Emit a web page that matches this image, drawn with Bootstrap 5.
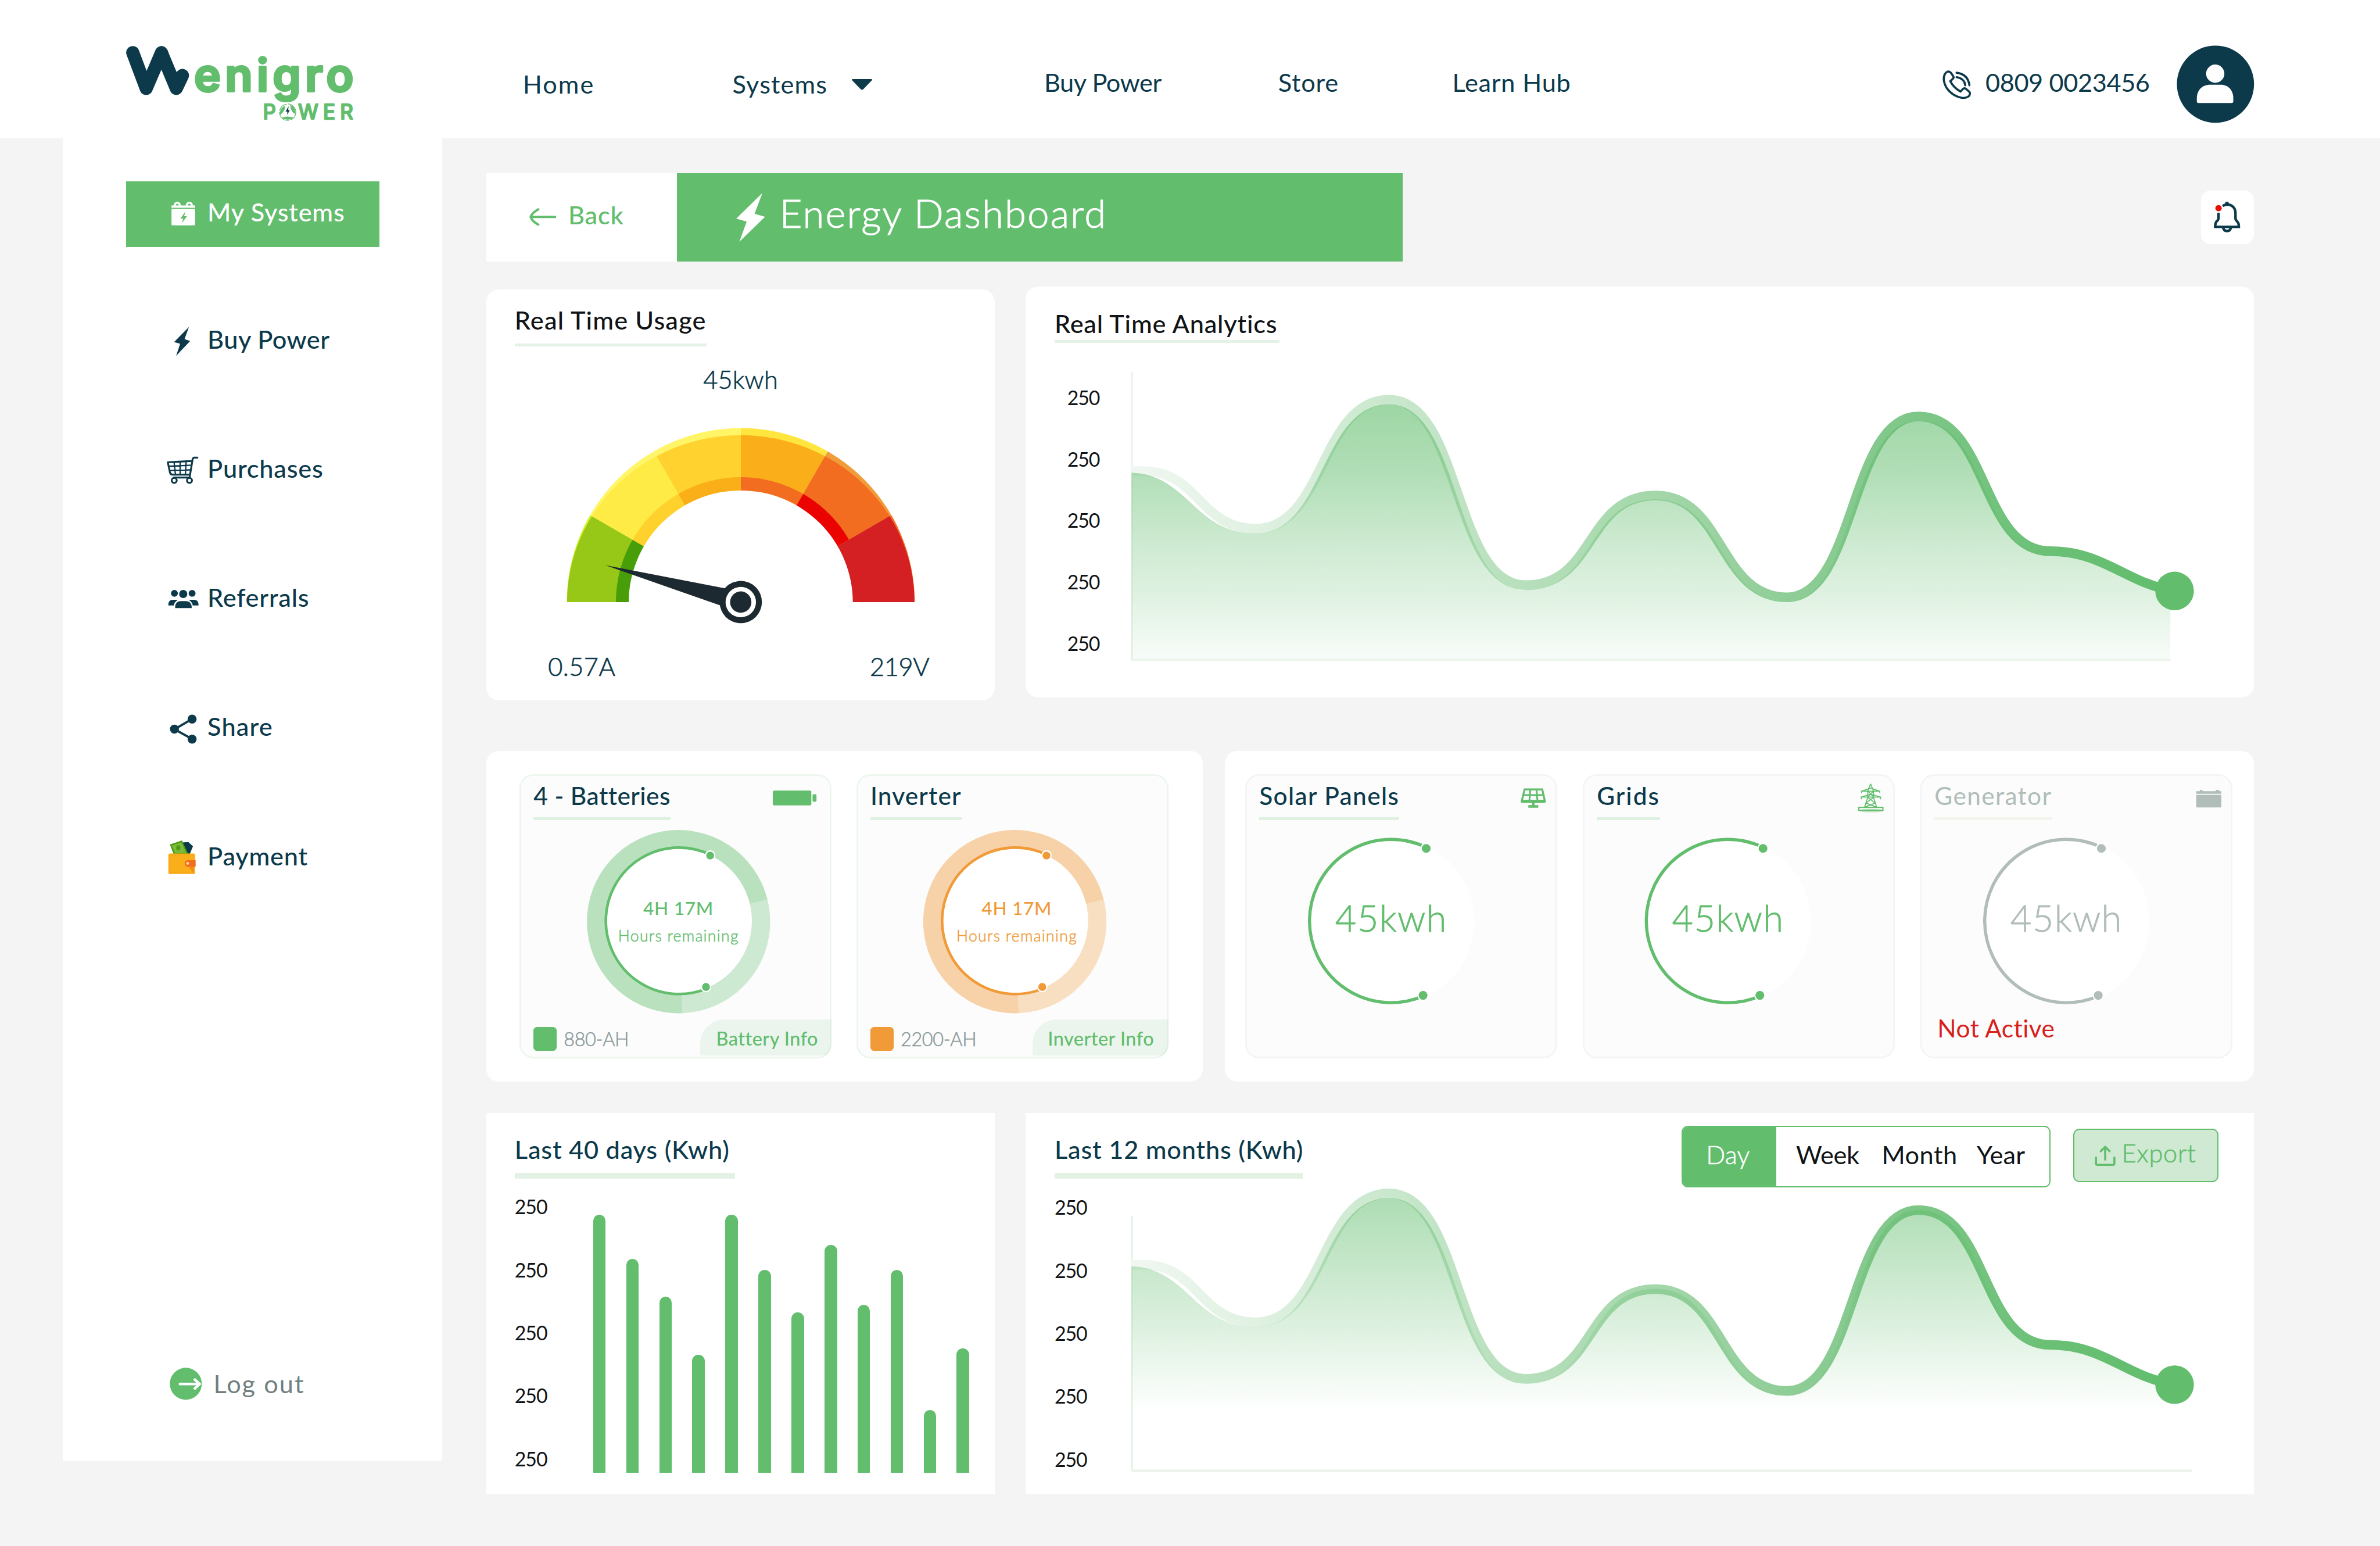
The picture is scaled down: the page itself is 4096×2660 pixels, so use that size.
<!DOCTYPE html>
<html lang="en">
<head>
<meta charset="utf-8">
<meta name="viewport" content="width=device-width, initial-scale=1">
<title>Wenigro Power - Energy Dashboard</title>
<link href="https://cdn.jsdelivr.net/npm/bootstrap@5.3.0/dist/css/bootstrap.min.css" rel="stylesheet">
<style>
  /* 1rem is a fixed share of the window, so the dashboard scales as one piece */
  html{font-size:calc(100vw / 453.6)}
  :root{--green:#62bd6d;--navy:#0c3a4b;--orange:#f09a38;--ink:#111416;--grey:#b0bdb8}
  body{font-family:Lato,"Open Sans",sans-serif;font-size:4.8rem;line-height:4.8rem;color:var(--navy);background:#f4f4f4;height:294.6rem;overflow:hidden}
  svg{display:block;flex:none;overflow:visible}
  .c-green{color:var(--green)}.c-orange{color:var(--orange)}.c-ink{color:var(--ink)}.c-grey{color:var(--grey)}
  .thin{font-weight:300;-webkit-text-stroke:.07rem currentColor}.book{font-weight:300;-webkit-text-stroke:.08rem currentColor}.med{font-weight:500}
  .lsm{letter-spacing:-.045rem}.ls0{letter-spacing:.02rem}.ls5{letter-spacing:.05rem}.ls8{letter-spacing:.085rem}
  .ls12{letter-spacing:.125rem}.ls15{letter-spacing:.15rem}.ls25{letter-spacing:.22rem}

  .topbar{height:26.4rem;padding:0 24rem 0 23rem}
  .logo{width:45rem;height:16rem;margin-top:7.7rem}
  .mainnav{margin:13.3rem 0 0 31.65rem}
  .mainnav .nav-link{padding:0;color:inherit;white-space:nowrap}
  .n-home{width:39.95rem;margin-top:.3rem}.n-sys{width:59.4rem;margin-top:.3rem}.n-buy{width:44.6rem}.n-store{width:33.2rem}
  .n-sys span{width:22.6rem}
  .phone{margin-top:13rem}.phone svg{width:6rem;height:6.2rem}
  .phone span{margin:.3rem 0 0 2.35rem}
  .avatar{width:14.8rem;height:14.8rem;margin:8.65rem 0 0 5.1rem}

  .side{width:72.3rem;height:251.9rem;margin-left:12rem;padding:8.1rem 12rem 0}
  .side .nav-link{height:12.6rem;width:48.3rem;padding:0 0 0 7.8rem;color:var(--navy);border-radius:0;margin-bottom:12rem;white-space:nowrap}
  .side .nav-link.active{background:var(--green);color:#fff;margin-bottom:11.7rem}
  .side .nav-link span{margin:0 0 .9rem .25rem}
  .side svg{width:7.5rem;height:12.6rem}
  .logout{margin:0 0 11.6rem 7.8rem;color:#71807f}
  .side .logout svg{width:8.9rem;height:6.2rem}

  .board{width:336.9rem;margin-left:8.4rem;padding-top:6.6rem}
  .backbtn{width:36.3rem;height:16.8rem;background:#fff;color:var(--green);padding:0 0 0 8.1rem;border-radius:0;font-size:inherit}
  .backbtn span{margin:0 0 1rem 2.3rem}
  .hero{width:138.3rem;height:16.8rem;background:var(--green);color:#fff;padding-left:11.3rem;font-size:7.4rem;font-weight:300;-webkit-text-stroke:.12rem currentColor;letter-spacing:.245rem}
  .hero span{margin:0 0 1.5rem 2.8rem}
  .bellbox{width:10.1rem;height:10.2rem;background:#fff;border-radius:1.8rem;padding:0}
  .panel{background:#fff;border:0;border-radius:2.4rem}
  .flat{border-radius:0}
  .head{border-bottom:.6rem solid #e4f2e5;width:max-content;white-space:nowrap}
  .usage{width:96.9rem;height:78.3rem;margin-top:.6rem;padding:3.4rem 5.4rem 0}
  .usage .head{padding-bottom:2rem}
  .usage .total{margin-top:3.95rem}
  .usage svg{width:67.3rem;height:38rem;margin-top:6.22rem}
  .usage .ends{margin:5.7rem 7.1rem 0 6.35rem}
  .live{width:234.1rem;height:78.3rem;padding:4.6rem 0 0 5.5rem}
  .live .head{padding-bottom:.8rem;width:42.9rem}
  .live .plot{margin-top:4.5rem;padding-left:2.4rem}
  .ticks{font-size:3.75rem;color:var(--ink);width:11.6rem;letter-spacing:-.12rem;padding-top:.15rem}
  .ticks div{height:11.7rem;line-height:11.7rem}
  .ticks.wide div{height:12rem;line-height:12rem}
  .mt-row2{margin-top:9.6rem}.mt-row3{margin-top:6rem}
  .store{width:136.5rem;height:63rem;padding:4.46rem 0 0 6.35rem;gap:4.75rem}
  .supply{width:196.2rem;height:63rem;padding:4.46rem 0 0 3.96rem;gap:4.9rem}
  .unit{width:59.45rem;height:54.05rem;background:#fcfcfc;border-radius:2.7rem;box-shadow:inset 0 0 0 .3rem #f3f4f4;overflow:hidden;font-size:4.7rem}
  .store .unit{box-shadow:inset 0 0 0 .3rem #ebf6ed}
  .unit .head{margin:1.6rem 0 0 2.64rem;padding-bottom:1.7rem;border-color:#dff1e0}
  .unit .head.off{border-color:#f1f5ec}
  .unit .ico{width:12rem;height:8.7rem;margin-bottom:-.1rem}
  .unit .dial{width:59.4rem;height:38rem}
  .dial .big{font-size:70px;font-weight:300;stroke:currentColor;stroke-width:.9px}
  .dial .sub{font-size:29.5px;font-weight:300;stroke:currentColor;stroke-width:.6px}
  .foot{font-size:3.6rem;height:6.9rem;white-space:nowrap}
  .swatch{width:4.5rem;height:4.5rem;border-radius:.7rem;background:currentColor;margin:1.5rem 0 0 2.6rem}
  .cap{color:#8d9c9c;margin:1.35rem 0 0 1.3rem}
  .info{height:6.9rem;width:25rem;padding:1.3rem 0 0 3rem;background:rgba(98,189,109,.1);color:var(--green);border-radius:4.6rem 0 0 0}
  .info.long{width:25.9rem;padding-left:2.9rem}
  .idle{color:#d8201c;margin:-.7rem 0 0 3.2rem}
  .days{width:96.9rem;height:72.6rem;padding:4.55rem 0 0 5.4rem}
  .months{width:234.1rem;height:72.6rem;padding:0 6.75rem 0 5.5rem}
  .days .head,.months .head{padding-bottom:2.03rem;border-bottom-width:1.2rem}
  .days .head{width:42rem}
  .months .head{margin-top:4.55rem;width:47.3rem}
  .pull{margin-top:-.79rem}
  .pull-more{margin-top:-2.32rem}
  .bars{gap:3.9rem;height:56.88rem;margin-left:3.35rem}
  .bars i{width:2.4rem;background:var(--green);border-radius:1.2rem 1.2rem 0 0}
  .period{width:70.4rem;height:11.75rem;border:.3rem solid var(--green);border-radius:1.2rem;margin:2.38rem 4.3rem 0 auto;overflow:hidden;color:var(--ink)}
  .period .btn{font-size:inherit;line-height:inherit;border:0;border-radius:0;padding:0 0 .7rem;color:inherit;flex:none;text-align:left}
  .period .btn.active{background:var(--green);color:#fff;width:17.9rem;padding-left:4.5rem}
  .p-week{width:20.3rem;padding-left:3.85rem!important}.p-month{width:18.2rem}
  .export{width:27.7rem;height:10.2rem;margin-top:3rem;border:.3rem solid var(--green);border-radius:1.2rem;background:#cfe9d2;color:var(--green);font-size:inherit;line-height:inherit;padding:0 0 0 3.9rem}
  .export svg{width:4rem;height:4rem}.export span{margin:0 0 1rem 1.1rem}
</style>
</head>
<body>

<svg width="0" height="0" class="position-absolute">
  <defs>
    <linearGradient id="trail" gradientUnits="userSpaceOnUse" x1="2156" y1="0" x2="4144" y2="0">
      <stop offset="0" stop-color="#f0f7f1"/><stop offset=".12" stop-color="#e0f1e2"/><stop offset=".25" stop-color="#c9e7cc"/><stop offset=".38" stop-color="#b6dfbb"/><stop offset=".5" stop-color="#a4d7aa"/><stop offset=".63" stop-color="#8fcd97"/><stop offset=".76" stop-color="#7dc687"/><stop offset=".88" stop-color="#6ac075"/><stop offset="1" stop-color="#62bd6d"/>
    </linearGradient>
    <linearGradient id="deep" gradientUnits="userSpaceOnUse" x1="0" y1="770" x2="0" y2="1258">
      <stop offset="0" stop-color="#62bd6d" stop-opacity=".62"/><stop offset=".28" stop-color="#62bd6d" stop-opacity=".49"/><stop offset=".55" stop-color="#62bd6d" stop-opacity=".31"/><stop offset=".75" stop-color="#62bd6d" stop-opacity=".2"/><stop offset="1" stop-color="#62bd6d" stop-opacity=".04"/>
    </linearGradient>
    <linearGradient id="soft" gradientUnits="userSpaceOnUse" x1="0" y1="770" x2="0" y2="1178">
      <stop offset="0" stop-color="#62bd6d" stop-opacity=".52"/><stop offset=".5" stop-color="#62bd6d" stop-opacity=".27"/><stop offset="1" stop-color="#62bd6d" stop-opacity="0"/>
    </linearGradient>
    <path id="wave" fill="none" stroke="url(#trail)" stroke-width="18.4" d="M2156 898.6Q2166 897.5 2177 897.7C2285 897.7 2285 1007.5 2393 1007.5C2525 1007.5 2515 761.7 2647 761.7C2785 761.7 2769 1115.2 2907 1115.2C3041 1115.2 3021 944.2 3155 944.2C3285 944.2 3275 1138.3 3405 1138.3C3537 1138.3 3524 793.6 3656 793.6C3789 793.6 3774 1050.4 3907 1050.4C4010 1050.4 4052 1112 4144 1126"/>

    <!-- donut with run-time arc -->
    <symbol id="ring" viewBox="0 0 594 380">
      <path fill="currentColor" opacity=".43" d="M303.2 193.5L310.5 368A174.6 174.6 0 1 1 472.6 151.3Z"/>
      <path fill="currentColor" opacity=".3" d="M303.2 193.5L310.5 368A174.6 174.6 0 0 0 472.6 151.3Z"/>
      <circle cx="305" cy="192" r="138" fill="#fff"/>
      <path fill="none" stroke="currentColor" stroke-width="5" d="M366 67A139.5 139.5 0 1 0 357 321"/>
      <circle cx="363.5" cy="67.5" r="8.8" fill="currentColor" stroke="#fff" stroke-width="2.6"/>
      <circle cx="355.5" cy="318" r="8.8" fill="currentColor" stroke="#fff" stroke-width="2.6"/>
    </symbol>
    <!-- plain supply dial -->
    <symbol id="dial" viewBox="0 0 594 380">
      <circle cx="278.3" cy="192.5" r="158" fill="#fff"/>
      <path fill="none" stroke="currentColor" stroke-width="6" d="M346 52.500A155.500 155.500 0 1 0 340 335"/>
      <circle cx="345" cy="54" r="9.6" fill="currentColor" stroke="#fff" stroke-width="2.4"/>
      <circle cx="339" cy="334" r="9.6" fill="currentColor" stroke="#fff" stroke-width="2.4"/>
    </symbol>
  </defs>
</svg>

<header class="topbar bg-white d-flex align-items-start">
  <!-- wordmark -->
  <svg class="logo" viewBox="30 51 1350 480">
    <path d="M98 119L175 324L262 120L347 324L382 250" fill="none" stroke="#0c3a4b" stroke-width="75" stroke-linecap="round" stroke-linejoin="round"/>
    <path d="M225 130Q235 82 262 82Q292 82 303 122Z" fill="#0c3a4b"/>
    <g fill="#62bd6d" stroke="#62bd6d" stroke-linejoin="round" stroke-linecap="round" font-family="Inter,Lato,sans-serif">
      <text x="449" y="341" font-size="258" font-weight="600" stroke-width="13" textLength="912" lengthAdjust="spacing">enigro</text>
      <text x="842" y="501" font-size="116" font-weight="400" stroke-width="8">P</text>
      <text x="1044" y="501" font-size="116" font-weight="400" stroke-width="8" textLength="314" lengthAdjust="spacing">WER</text>
    </g>
    <circle cx="984" cy="460" r="47" fill="none" stroke="#62bd6d" stroke-width="4" stroke-dasharray="60 7 80 8"/>
    <path d="M938 478Q934 438 970 422Q972 452 938 478ZM1030 472Q1000 458 998 418Q1030 428 1030 472ZM950 492Q978 478 1020 492Q984 514 950 492Z" fill="#62bd6d"/>
    <path d="M989 426L972 456H982L981 475L996 448H987Z" fill="#0c3a4b"/>
  </svg>

  <nav class="mainnav nav flex-nowrap">
    <a class="nav-link n-home ls25" href="#">Home</a>
    <a class="nav-link n-sys ls12 d-flex align-items-center" href="#"><span>Systems</span>
      <svg style="width:4.1rem;height:2.2rem" viewBox="0 0 41 22"><path d="M3 1H38Q41 1 39 4L23 20.500Q20.500 22.500 18 20.500L2 4Q0 1 3 1Z" fill="currentColor"/></svg></a>
    <a class="nav-link n-buy lsm" href="#">Buy Power</a>
    <a class="nav-link n-store ls8" href="#">Store</a>
    <a class="nav-link ls8" href="#">Learn Hub</a>
  </nav>

  <div class="phone d-flex ms-auto lsm text-nowrap">
    <svg viewBox="0 0 60 62" fill="none" stroke="currentColor" stroke-width="4" stroke-linecap="round" stroke-linejoin="round"><path d="M11 7Q14.500 6 17 9L22 16Q23 19 20.500 21L16 25Q22 37 35.500 45L40 40Q42.500 37.500 45.500 39.500L52 45Q55 48 52 53Q47 57.500 39 57Q20 54 9 38Q0 22 6 11Q8 8 11 7Z"/><path d="M28 9Q50 12 52.500 33M28 17.500Q43 20 44.500 33"/></svg>
    <span>0809 0023456</span>
  </div>
  <svg class="avatar" viewBox="0 0 148 148"><circle cx="74" cy="74" r="73.5" fill="#0c3a4b"/><circle cx="73.600" cy="54" r="17.400" fill="#fff"/><path d="M38.500 107V101C38.500 85 49 75 64 75H84C98 75 108 85 108 101V107Q108 110 104.500 110H42Q38.500 110 38.500 107Z" fill="#fff"/></svg>
</header>

<div class="d-flex align-items-start">
  <aside class="side bg-white d-flex flex-column">
    <nav class="nav nav-pills flex-column med">
      <a class="nav-link active d-flex align-items-center ls8" href="#">
        <svg viewBox="0 0 75 126"><path fill="#fff" d="M9 46H13Q14 39 20 39T27 46H36Q37 39 43 39T50 46H54V50.500H9ZM17 46H23Q22 42.500 20 42.500T17 46ZM40 46H46Q45 42.500 43 42.500T40 46ZM9 52.500H54V82Q54 84 52 84H11Q9 84 9 82Z"/><path fill="#62bd6d" d="M36 57L26 71H31.500L28.500 80L38.500 66.500H33Z"/></svg>
        <span>My Systems</span></a>
      <a class="nav-link d-flex align-items-center ls5" href="#">
        <svg viewBox="0 0 75 126"><path fill="currentColor" d="M42.300 34.800L14 63.600L25.500 67L17.800 90L44.600 61.700L33.900 58.200Z"/></svg>
        <span>Buy Power</span></a>
      <a class="nav-link d-flex align-items-center ls8" href="#">
        <svg viewBox="0 0 75 126" fill="none" stroke="currentColor" stroke-width="3.500" stroke-linecap="round" stroke-linejoin="round"><path d="M58.500 38H51.500L49.500 40L43.500 76H13M48.500 44.500L2 47L6 66Q7 70.500 11 70.500H44"/><path stroke-width="2.600" d="M4 54.500L47 52.500M5.500 62.500L45.500 61.500M14 47L16.500 70M25.500 46V70M37 45L35.500 70"/><circle cx="14.200" cy="81.500" r="4.800"/><circle cx="43.300" cy="81.500" r="4.800"/></svg>
        <span>Purchases</span></a>
      <a class="nav-link d-flex align-items-center ls8" href="#">
        <svg viewBox="0 0 75 126" fill="currentColor"><circle cx="14.600" cy="50.800" r="6.600"/><circle cx="48.300" cy="50.800" r="6.600"/><circle cx="31.400" cy="52" r="7.800"/><path d="M16 79V76Q17 65.500 27 65.500H36Q46.500 65.500 47.500 76V79ZM3 74V71Q4 63 11 63H18Q19.500 63 20.500 64Q14.500 67.500 13.500 74ZM60.500 74V71Q59.500 63 52.500 63H45Q43.500 63 42.500 64Q48.500 67.500 49.500 74Z"/></svg>
        <span>Referrals</span></a>
      <a class="nav-link d-flex align-items-center ls12" href="#">
        <svg viewBox="0 0 75 126" fill="currentColor"><path d="M48.300 44.500L14.600 64L48.300 82.500" fill="none" stroke="currentColor" stroke-width="4.200"/><circle cx="14.600" cy="63.800" r="8.600"/><circle cx="48.300" cy="44.500" r="8.600"/><circle cx="48.300" cy="82.800" r="8.600"/></svg>
        <span>Share</span></a>
      <a class="nav-link d-flex align-items-center ls8" href="#">
        <svg viewBox="0 0 75 126"><path fill="#0c3a4b" d="M26 34L41 33L50 41L43 58H20Z"/><path fill="#4b9b13" d="M6 37.600L29 30L41 56H13Z"/><path fill="#7db93a" d="M9.500 39.500L28 33.500L37 54H16Z"/><ellipse cx="22" cy="44" rx="4" ry="5" fill="#4b9b13"/><rect x="3" y="54.700" width="51" height="39.300" rx="3" fill="#faaf1a"/><path d="M5.500 57.500H51.500V91.500H5.500Z" fill="none" stroke="#f39a1b" stroke-width=".9" stroke-dasharray="2 1.500"/><path d="M42 80.500L51 92V80Z" fill="#f08a1d"/><path fill="#f36d20" d="M40 67.600H55V80H40Q34 79.500 34 74T40 67.600Z"/><circle cx="39.800" cy="73.600" r="2.700" fill="#fcd7a0"/></svg>
        <span>Payment</span></a>
    </nav>
    <a class="logout d-flex align-items-center mt-auto ls25 text-decoration-none" href="#">
      <svg viewBox="0 0 89 62"><circle cx="36.300" cy="32" r="30.500" fill="#62bd6d"/><path d="M23 32.500H62M52 22.500L62.500 32.500L52 42.500" fill="none" stroke="#fff" stroke-width="5"/></svg>
      <span>Log out</span></a>
  </aside>

  <main class="board">
    <div class="d-flex align-items-start">
      <a class="backbtn btn d-flex align-items-center med ls8" href="#">
        <svg style="width:5.1rem;height:3.4rem" viewBox="0 0 51 34" fill="none" stroke="currentColor" stroke-width="4.500" stroke-linecap="round" stroke-linejoin="round"><path d="M49 17H3M17 2.500Q5 9 2.500 17Q5 25 17 31.500"/></svg>
        <span>Back</span></a>
      <div class="hero d-flex align-items-center">
        <svg style="width:5.5rem;height:9.300rem" viewBox="0 0 55 93" fill="#fff"><path d="M50 0L0 49L20 54.500L6 93L55 45.500L35 39.500Z"/></svg>
        <span>Energy Dashboard</span></div>
      <button class="bellbox btn ms-auto" style="margin-top:3.3rem" aria-label="Notifications">
        <svg viewBox="0 0 101 102"><g fill="none" stroke="#0c3a4b" stroke-width="5"><path d="M33 42V53Q32.500 56 29 59Q26.500 62.500 26.500 67V69.500H72.500V67Q72.500 62.500 69.500 59Q66 56 66 53V43C66 32 59 26 49.500 26Q45 26 41 29"/><path d="M42 71Q43 77.500 49.500 77.500T57 71"/></g><circle cx="49.400" cy="24" r="3.600" fill="#0c3a4b"/><circle cx="33" cy="33" r="6.200" fill="#e80d05"/></svg>
      </button>
    </div>

    <div class="d-flex justify-content-between align-items-start" style="margin-top:4.8rem">
      <section class="usage card panel">
        <div class="head med ls12 c-ink">Real Time Usage</div>
        <div class="total text-center book ls0">45kwh</div>
        <svg class="align-self-center" viewBox="1075 810 673 380">
          <defs>
            <clipPath id="s1"><path d="M1411.500 1147.700H1000V910.100Z"/></clipPath>
            <clipPath id="s2"><path d="M1411.500 1147.700L1000 910.100V700H1153Z"/></clipPath>
            <clipPath id="s3"><path d="M1411.500 1147.700L1153 700H1411.500Z"/></clipPath>
            <clipPath id="s4"><path d="M1411.500 1147.700V700H1670Z"/></clipPath>
            <clipPath id="s5"><path d="M1411.500 1147.700L1670 700H1823V910.100Z"/></clipPath>
            <clipPath id="s6"><path d="M1411.500 1147.700L1823 910.100V1147.700Z"/></clipPath>
            <circle id="go" cx="1411.500" cy="1147.700" r="331.500"/>
            <ellipse id="gm" cx="1411.500" cy="1147.700" rx="331" ry="318"/>
            <circle id="gi" cx="1411.500" cy="1147.700" r="238"/>
          </defs>
          <g clip-path="url(#s1)"><use href="#go" fill="#d3f22c"/><use href="#gm" fill="#97c817"/><use href="#gi" fill="#489e08"/></g>
          <g clip-path="url(#s2)"><use href="#go" fill="#fff566"/><use href="#gm" fill="#ffeb46"/><use href="#gi" fill="#ffd12c"/></g>
          <g clip-path="url(#s3)"><use href="#go" fill="#fff566"/><use href="#gm" fill="#ffd22f"/><use href="#gi" fill="#faae18"/></g>
          <g clip-path="url(#s4)"><use href="#go" fill="#ffe63e"/><use href="#gm" fill="#faaf1a"/><use href="#gi" fill="#f36d20"/></g>
          <g clip-path="url(#s5)"><use href="#go" fill="#f09c3a"/><use href="#gm" fill="#f36d20"/><use href="#gi" fill="#ea0300"/></g>
          <g clip-path="url(#s6)"><use href="#go" fill="#f36d20"/><use href="#gm" fill="#d42022"/></g>
          <path d="M1197.900 1148.500A213.600 213.600 0 0 1 1625.100 1148.500Z" fill="#fff"/>
          <path d="M1153.500 1077.500L1390 1123L1372 1154Z" fill="#1d2930"/>
          <circle cx="1411.500" cy="1147.700" r="40.300" fill="#1d2930"/><circle cx="1411.500" cy="1147.700" r="29" fill="#fff"/><circle cx="1411.500" cy="1147.700" r="20.300" fill="#1d2930"/>
        </svg>
        <div class="ends d-flex justify-content-between book ls5"><span>0.57A</span><span class="lsm">219V</span></div>
      </section>

      <section class="live card panel">
        <div class="head med ls8 c-ink">Real Time Analytics</div>
        <div class="plot d-flex">
          <div class="ticks"><div>250</div><div>250</div><div>250</div><div>250</div><div>250</div></div>
          <svg style="width:204rem;height:58.500rem" viewBox="2149 698.900 2040 585">
            <path d="M2156.500 708V1259" stroke="#edf2ee" stroke-width="4" fill="none"/>
            <use href="#wave"/>
            <path fill="url(#deep)" d="M2156 900.800C2265 905 2275 1016.400 2393 1016.400C2525 1016.400 2515 770.600 2647 770.600C2785 770.600 2769 1124.500 2907 1124.500C3041 1124.500 3021 951.600 3155 951.600C3285 951.600 3275 1146.600 3405 1146.600C3537 1146.600 3524 801.500 3656 801.500C3789 801.500 3774 1059.300 3907 1059.300C4010 1059.300 4052 1121 4136 1133V1257H2156Z"/>
            <path d="M2156 1257.300H4136" stroke="#edf4ec" stroke-width="4.500"/>
            <circle cx="4144" cy="1126.200" r="36.800" fill="#62bd6d"/>
          </svg>
        </div>
      </section>
    </div>

    <div class="d-flex justify-content-between mt-row2">
      <section class="store card panel flex-row">
        <article class="unit">
          <div class="d-flex justify-content-between align-items-start">
            <div class="head med ls5">4 - Batteries</div>
            <svg class="ico" viewBox="0 0 120 87" fill="#62bd6d"><rect x="7.700" y="31.400" width="73.500" height="28" rx="3"/><rect x="83.500" y="38.300" width="7.500" height="14.400" rx="2.500"/></svg>
          </div>
          <svg class="dial c-green" viewBox="0 0 594 380"><use href="#ring"/>
            <g fill="currentColor" text-anchor="middle"><text x="302.500" y="180" font-size="35" font-weight="500" textLength="133">4H 17M</text><text class="sub" x="302.500" y="231" textLength="229">Hours remaining</text></g></svg>
          <div class="foot d-flex"><div class="swatch c-green"></div><div class="cap thin lsm">880-AH</div><a class="info ms-auto med ls5 text-decoration-none" href="#">Battery Info</a></div>
        </article>
        <article class="unit">
          <div class="d-flex justify-content-between align-items-start">
            <div class="head med ls12">Inverter</div>
            <svg class="ico" viewBox="0 0 120 87"></svg>
          </div>
          <svg class="dial c-orange" viewBox="0 0 594 380"><use href="#ring" x="-1.400"/>
            <g fill="currentColor" text-anchor="middle"><text x="305" y="180" font-size="35" font-weight="500" textLength="133">4H 17M</text><text class="sub" x="305" y="231" textLength="229">Hours remaining</text></g></svg>
          <div class="foot d-flex"><div class="swatch c-orange"></div><div class="cap thin lsm">2200-AH</div><a class="info long ms-auto med ls5 text-decoration-none" href="#">Inverter Info</a></div>
        </article>
      </section>

      <section class="supply card panel flex-row">
        <article class="unit">
          <div class="d-flex justify-content-between align-items-start">
            <div class="head med ls15">Solar Panels</div>
            <svg class="ico" viewBox="0 0 120 87" fill="none" stroke="#62bd6d"><path d="M57.500 29H91L96 51H52Z" stroke-width="3.800"/><path d="M51 52H97" stroke-width="5.500"/><path d="M55 40H94M68.500 29L66.500 51M80 29L82 51" stroke-width="3.400"/><path d="M74 54V60M64.500 61.500H83.500" stroke-width="4.800"/></svg>
          </div>
          <svg class="dial c-green" viewBox="0 0 594 380"><use href="#dial"/><text class="big" x="277.500" y="213" fill="currentColor" text-anchor="middle" textLength="212">45kwh</text></svg>
        </article>
        <article class="unit">
          <div class="d-flex justify-content-between align-items-start">
            <div class="head med ls25">Grids</div>
            <svg class="ico" viewBox="0 0 120 87" fill="none" stroke="#62bd6d" stroke-width="1.900"><ellipse cx="75" cy="69.500" rx="23" ry="3.400" fill="#c4e6c8" stroke="none"/><path d="M73.400 18.500L68 32V44L62 63M73.400 18.500L79 32V44L85 63"/><path d="M56 36V32.500L73.400 26.500L91 32.500V36M58 32.500H89M55.500 48V43.500L73.400 38L92.500 43.500V48M57 43.500H91"/><path d="M68 32L79 43.500M79 32L68 43.500M67.500 44L82.500 55M79.500 44L64.500 55M64.500 55L85 63M82.500 55L62 63"/><path d="M51 63.500H97V69H51Z" stroke-width="2.200"/></svg>
          </div>
          <svg class="dial c-green" viewBox="0 0 594 380"><use href="#dial" x="-1.500"/><text class="big" x="276" y="213" fill="currentColor" text-anchor="middle" textLength="212">45kwh</text></svg>
        </article>
        <article class="unit">
          <div class="d-flex justify-content-between align-items-start">
            <div class="head off c-grey ls15">Generator</div>
            <svg class="ico" viewBox="0 0 120 87" fill="#b0bdb8"><path d="M50.700 32.400H57.500V30H62.500V32.400H88V30H94.500V32.400H98.500V37.400H50.700ZM50.700 39.400H98.500V63.400H50.700Z"/></svg>
          </div>
          <svg class="dial c-grey" viewBox="0 0 594 380"><use href="#dial"/><text class="big" x="277.500" y="213" fill="currentColor" text-anchor="middle" textLength="212">45kwh</text></svg>
          <div class="idle ls5">Not Active</div>
        </article>
      </section>
    </div>

    <div class="d-flex justify-content-between mt-row3">
      <section class="days card panel flat">
        <div class="head med ls8">Last 40 days (Kwh)</div>
        <div class="pull d-flex">
          <div class="ticks wide"><div>250</div><div>250</div><div>250</div><div>250</div><div>250</div></div>
          <div class="bars d-flex align-items-end">
            <i style="height:49.2rem"></i><i style="height:40.8rem"></i><i style="height:33.6rem"></i><i style="height:22.500rem"></i><i style="height:49.200rem"></i><i style="height:38.700rem"></i><i style="height:30.600rem"></i><i style="height:43.500rem"></i><i style="height:32.100rem"></i><i style="height:38.700rem"></i><i style="height:12rem"></i><i style="height:23.700rem"></i>
          </div>
        </div>
      </section>

      <section class="months card panel flat">
        <div class="d-flex align-items-start">
          <div class="head med ls8">Last 12 months (Kwh)</div>
          <div class="period btn-group">
            <button class="btn active thin ls0">Day</button><button class="btn p-week lsm">Week</button><button class="btn p-month ls5">Month</button><button class="btn ls0">Year</button>
          </div>
          <button class="export btn d-flex align-items-center thin ls8">
            <svg viewBox="0 0 40 40" fill="none" stroke="currentColor" stroke-width="4" stroke-linecap="round" stroke-linejoin="round"><path d="M20 28V4M11.500 12L20 3.500L28.500 12M2.500 24V35Q2.500 38 5.500 38H34.500Q37.500 38 37.500 35V24"/></svg>
            <span>Export</span></button>
        </div>
        <div class="pull-more d-flex">
          <div class="ticks wide"><div>250</div><div>250</div><div>250</div><div>250</div><div>250</div></div>
          <svg style="width:204rem;height:58.500rem;margin-left:2.400rem" viewBox="2149 727.100 2040 585">
            <path d="M2156.500 804V1290" stroke="#e4f3e6" stroke-width="3.500" fill="none"/>
            <use href="#wave"/>
            <path fill="url(#soft)" d="M2156 900.800C2265 905 2275 1016.400 2393 1016.400C2525 1016.400 2515 770.600 2647 770.600C2785 770.600 2769 1124.500 2907 1124.500C3041 1124.500 3021 943.500 3155 943.500C3285 943.500 3275 1146.600 3405 1146.600C3537 1146.600 3524 793.500 3656 793.500C3789 793.500 3774 1059.300 3907 1059.300C4010 1059.300 4052 1121 4136 1133V1257H2156Z"/>
            <path d="M2156 1290.200H4178" stroke="#ebf3ea" stroke-width="4.500"/>
            <circle cx="4144" cy="1126.200" r="36.800" fill="#62bd6d"/>
          </svg>
        </div>
      </section>
    </div>
  </main>
</div>

<script src="https://cdn.jsdelivr.net/npm/bootstrap@5.3.0/dist/js/bootstrap.bundle.min.js"></script>
</body>
</html>
